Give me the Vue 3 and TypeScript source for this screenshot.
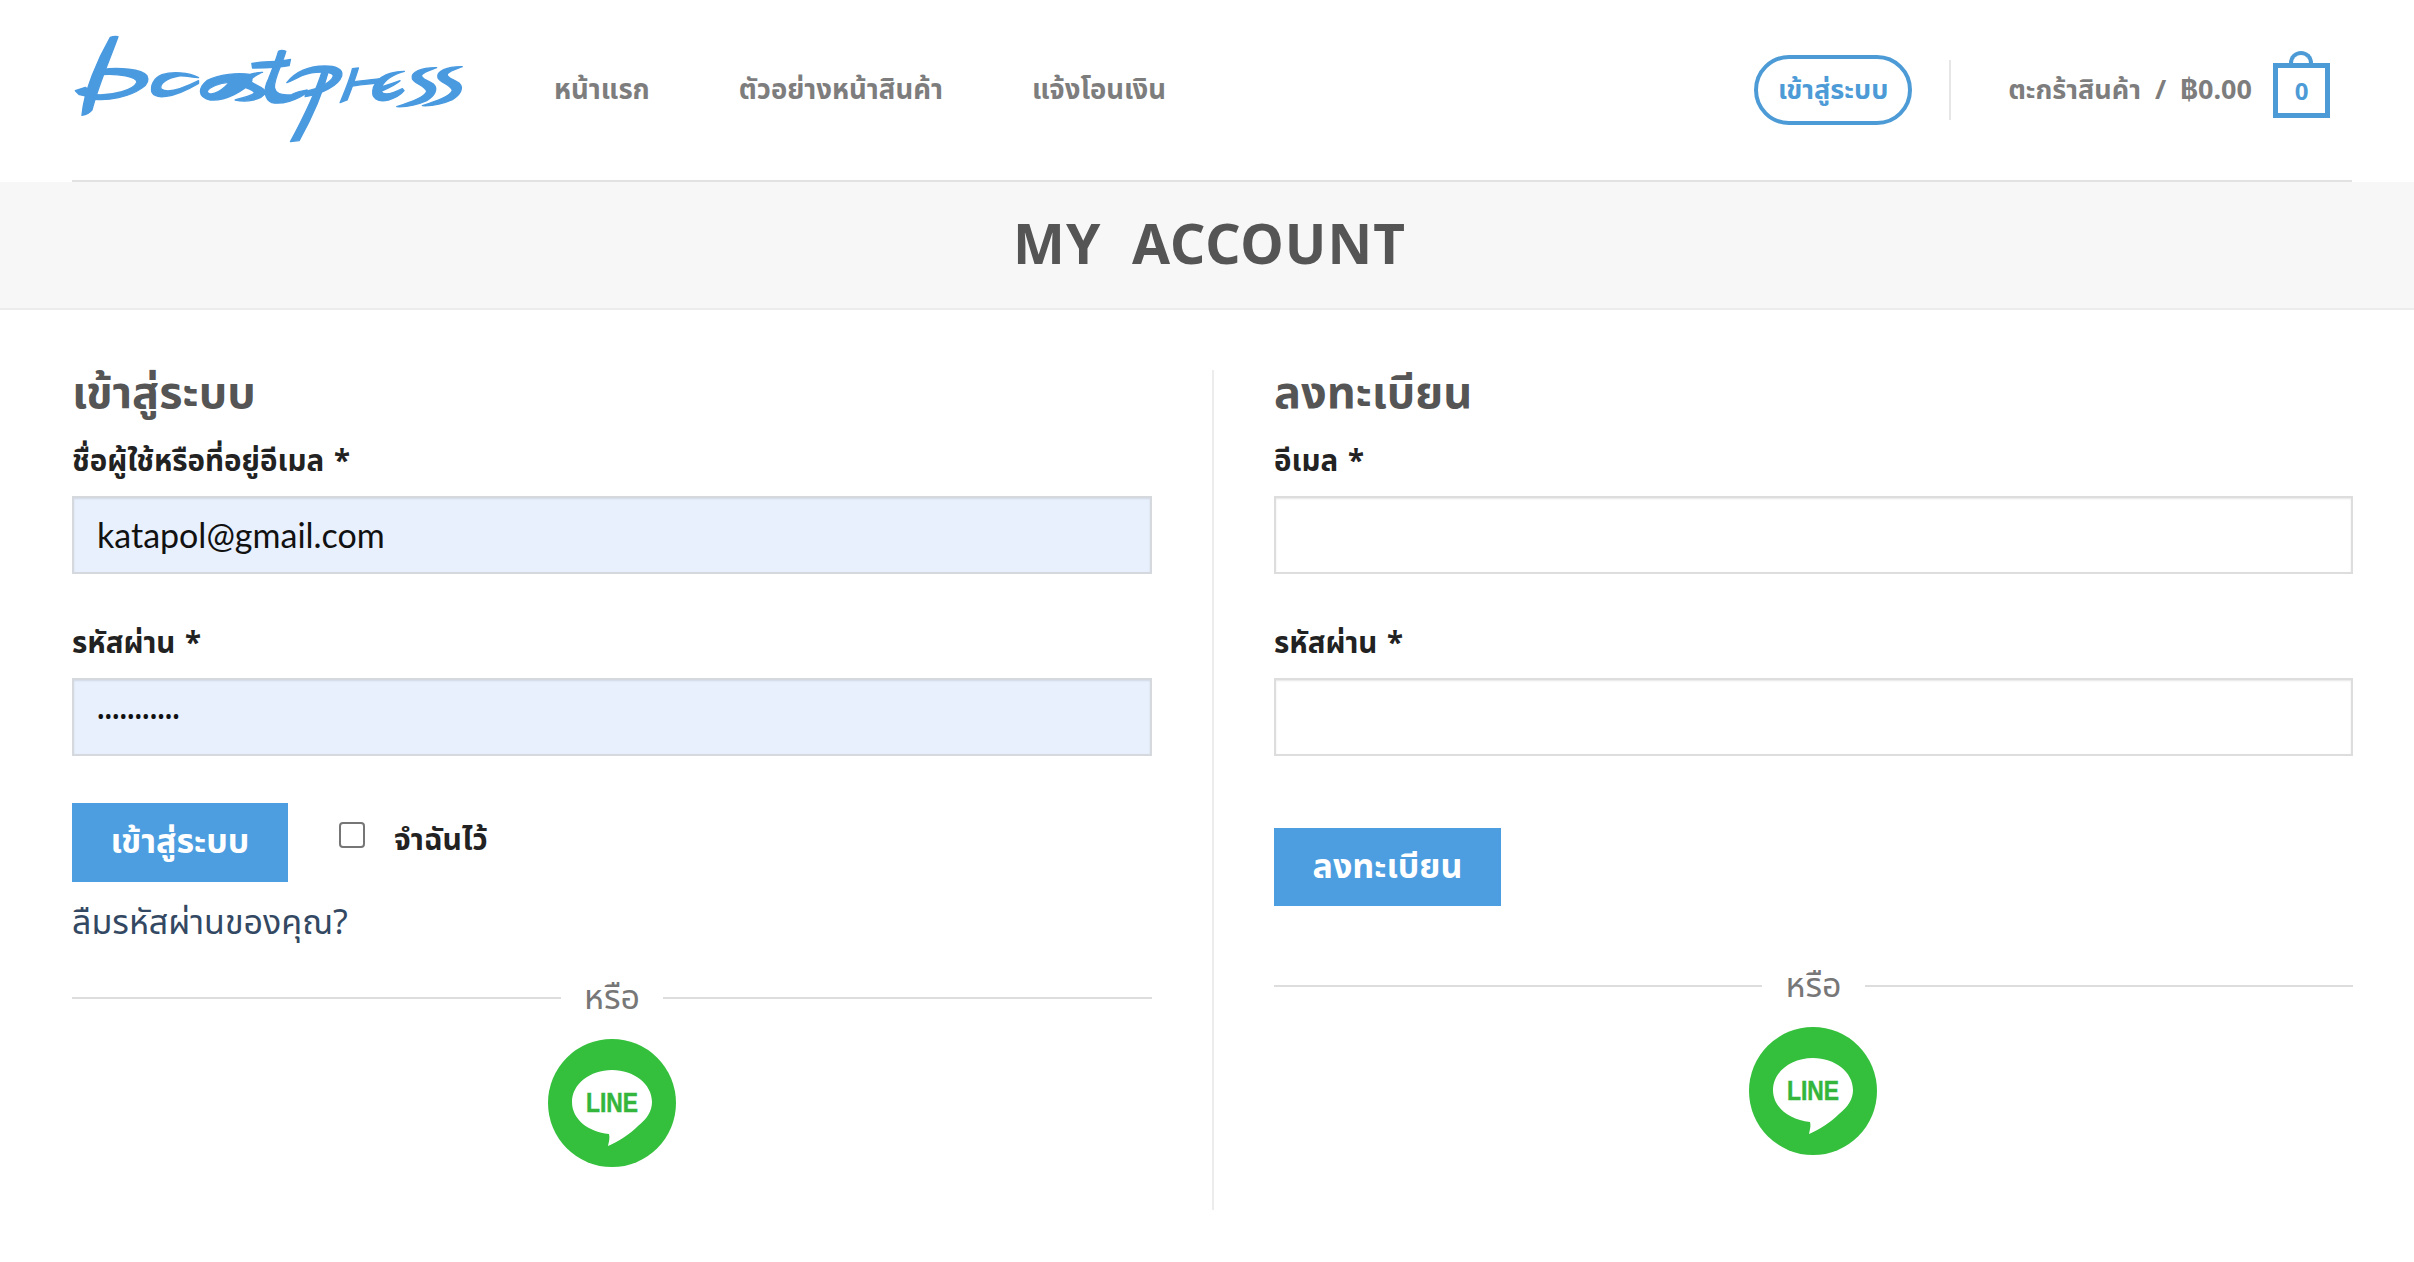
<script setup lang="ts">
const navItems: string[] = ['หน้าแรก', 'ตัวอย่างหน้าสินค้า', 'แจ้งโอนเงิน']
</script>

<template>
  <div class="page">
    <header class="header">
      <div class="header-inner">
        <svg class="logo" viewBox="100 100 1180 330" aria-label="boostpress">
          <g fill="#4a9ae0" stroke="#4a9ae0" stroke-width="4" stroke-linejoin="round" fill-rule="evenodd">
            <path d="M215 110 Q226 106 238 108 C218 165 180 250 160 328 Q150 342 130 344 C136 270 178 175 215 110 Z" />
            <path d="M192 206 C240 200 310 205 325 225 Q335 245 310 262 C270 290 210 300 168 296 L172 282 C225 285 285 268 295 245 C295 228 240 218 188 222 Z" />
            <path d="M110 270 Q125 265 140 260 L170 282 L165 298 Q145 285 122 282 Z" />
            <path d="M480 231 C450 214 400 212 370 222 C345 232 335 255 340 275 C350 296 400 295 480 248 L480 240 C430 265 385 278 368 265 C360 250 385 232 420 226 C445 224 465 232 480 231 Z" />
            <path d="M640 222 C600 215 540 220 505 240 C480 260 475 290 515 298 C560 302 620 270 640 240 Z M572 246 C545 244 510 262 506 272 C510 288 540 280 572 246 Z" />
            <path d="M672 215 C640 216 608 228 608 250 C612 264 640 262 648 276 C640 288 610 290 590 298 C625 306 668 298 682 276 C680 258 640 252 636 240 C640 228 655 222 672 215 Z" />
            <path d="M720 152 Q730 146 742 152 C730 195 705 235 708 262 C712 280 735 285 760 282 C775 272 790 272 806 268 L806 275 C775 300 730 312 700 306 C680 298 672 270 690 235 C700 210 712 180 720 152 Z" />
            <path d="M640 188 C680 182 720 184 756 176 L752 195 C715 202 670 202 642 202 Z" />
            <path d="M853 206 L872 204 C850 290 810 370 782 420 L756 423 C790 360 830 280 853 206 Z" />
            <path d="M745 246 C770 215 810 196 860 196 C890 196 915 205 910 225 C900 255 850 280 800 288 L802 272 C840 265 880 245 885 225 C880 212 830 210 790 225 C775 232 760 240 745 246 Z" />
            <path d="M942 204 L960 202 C950 235 935 275 926 298 L905 306 C920 270 935 235 942 204 Z" />
            <path d="M935 245 C970 240 1000 238 1040 232 L1030 244 C1000 250 965 252 932 258 Z" />
            <path d="M1098 212 C1060 212 1020 225 1005 260 C995 295 1020 305 1050 298 C1070 292 1085 285 1097 270 L1092 264 C1060 280 1035 285 1028 272 C1050 262 1075 250 1085 240 C1062 248 1045 254 1030 258 C1040 235 1070 220 1098 212 Z" />
            <path d="M1195 201 C1150 200 1115 215 1122 235 C1130 250 1160 255 1165 272 C1160 290 1115 305 1075 318 Q1120 320 1165 300 C1190 285 1200 265 1185 250 C1170 238 1145 235 1150 222 C1160 212 1180 207 1195 201 Z" />
            <path d="M1272 198 C1227 197 1192 212 1199 232 C1207 247 1237 252 1242 269 C1237 287 1192 302 1152 315 Q1197 317 1242 297 C1267 282 1277 262 1262 247 C1247 235 1222 232 1227 219 C1237 209 1257 204 1272 198 Z" />
          </g>
        </svg>
        <nav class="nav">
          <a v-for="item in navItems" :key="item" class="nav-link">{{ item }}</a>
        </nav>
        <div class="header-right">
          <a class="login-pill">เข้าสู่ระบบ</a>
          <span class="vline"></span>
          <a class="cart-text">ตะกร้าสินค้า&nbsp; /&nbsp; ฿0.00</a>
          <span class="bag">0</span>
        </div>
      </div>
    </header>

    <div class="title-bar">
      <h1 class="title">MY&nbsp; ACCOUNT</h1>
    </div>

    <main class="columns">
      <section class="col col-left">
        <h2 class="heading">เข้าสู่ระบบ</h2>
        <label class="label">ชื่อผู้ใช้หรือที่อยู่อีเมล *</label>
        <input class="field autofill" type="text" value="katapol@gmail.com" />
        <label class="label second">รหัสผ่าน *</label>
        <input class="field autofill pass" type="password" value="12345678901" />
        <div class="login-row">
          <button class="btn">เข้าสู่ระบบ</button>
          <span class="check"></span>
          <span class="remember">จำฉันไว้</span>
        </div>
        <a class="forgot">ลืมรหัสผ่านของคุณ?</a>
        <div class="or or-left"><span>หรือ</span></div>
        <div class="line-wrap">
          <svg class="line-icon" viewBox="0 0 128 128">
            <circle cx="64" cy="64" r="64" fill="#34c03c" />
            <path d="M64 31 C86 31 104 45 104 63 C104 72 99 80 90 87 C82 95 70 103 60 107 C61 102 62 99 61 95 C40 93 24 80 24 63 C24 45 42 31 64 31 Z" fill="#fff" />
            <text x="64" y="73" text-anchor="middle" textLength="52" lengthAdjust="spacingAndGlyphs" class="line-text">LINE</text>
          </svg>
        </div>
      </section>

      <section class="col col-right">
        <h2 class="heading">ลงทะเบียน</h2>
        <label class="label">อีเมล *</label>
        <input class="field" type="text" />
        <label class="label second">รหัสผ่าน *</label>
        <input class="field" type="password" />
        <button class="btn btn-register">ลงทะเบียน</button>
        <div class="or or-right"><span>หรือ</span></div>
        <div class="line-wrap line-wrap-right">
          <svg class="line-icon" viewBox="0 0 128 128">
            <circle cx="64" cy="64" r="64" fill="#34c03c" />
            <path d="M64 31 C86 31 104 45 104 63 C104 72 99 80 90 87 C82 95 70 103 60 107 C61 102 62 99 61 95 C40 93 24 80 24 63 C24 45 42 31 64 31 Z" fill="#fff" />
            <text x="64" y="73" text-anchor="middle" textLength="52" lengthAdjust="spacingAndGlyphs" class="line-text">LINE</text>
          </svg>
        </div>
      </section>
    </main>
  </div>
</template>

<style>
html, body { margin: 0; background: #fff; }
</style>

<style scoped>
.page {
  width: 2414px;
  height: 1262px;
  overflow: hidden;
  font-family: "Noto Sans", "Inter", "Noto Sans Thai", "DejaVu Sans", sans-serif;
  color: #222;
}
.header-inner {
  margin: 0 62px 0 72px;
  height: 180px;
  border-bottom: 2px solid #e2e2e2;
  display: flex;
  align-items: center;
}
.logo { width: 393px; height: 110px; margin-top: -2px; flex: none; }
.nav { display: flex; gap: 89px; margin-left: 89px; }
.nav-link { font-size: 27.5px; font-weight: 700; color: #7d7d7d; }
.cart-text { font-size: 27px; font-weight: 700; color: #7d7d7d; }
.header-right { margin-left: auto; display: flex; align-items: center; }
.login-pill {
  box-sizing: border-box;
  width: 158px; height: 70px;
  border: 4px solid #4d9bd6;
  border-radius: 35px;
  display: flex; align-items: center; justify-content: center;
  color: #4d9bd6; font-size: 27px; font-weight: 700;
}
.vline { width: 2px; height: 60px; background: #e6e6e6; margin: 0 57px 0 37px; }
.bag {
  position: relative;
  box-sizing: border-box;
  width: 57px; height: 55px;
  margin: 0 22px 0 21px;
  border: 5px solid #4d9bd6;
  display: flex; align-items: center; justify-content: center;
  color: #4d9bd6; font-size: 24px; font-weight: 700;
}
.bag::before {
  content: "";
  position: absolute;
  left: 11px; top: -17px;
  width: 16px; height: 13px;
  border: 4px solid #4d9bd6;
  border-bottom: 0;
  border-radius: 14px 14px 0 0;
}
.title-bar {
  height: 126px;
  background: #f7f7f7;
  border-bottom: 2px solid #ececec;
  display: flex; align-items: center; justify-content: center;
}
.title { margin: 0; padding: 0 0 5px 5px; font-size: 55px; font-weight: 700; color: #555; letter-spacing: 1px; line-height: 1; }
.columns {
  display: grid;
  grid-template-columns: 1142px 1139px;
  margin: 60px 62px 0 72px;
}
.col { height: 840px; box-sizing: border-box; }
.col-left { padding-right: 60px; border-right: 2px solid #ececec; }
.col-right { padding-left: 60px; }
.heading { margin: -3px 0 0; height: 48px; line-height: 48px; font-size: 45px; font-weight: 700; color: #555; }
.label { display: block; height: 40px; line-height: 40px; margin-top: 25px; font-size: 29.5px; font-weight: 700; color: #222; word-spacing: 2px; }
.label.second { margin-top: 48px; }
.field {
  display: block;
  box-sizing: border-box;
  width: 100%; height: 78px;
  margin-top: 16px;
  padding: 0 23px 2px;
  border: 2px solid #ddd;
  background: #fff;
  box-shadow: inset 0 1px 2px rgba(0,0,0,.1);
  font: inherit; font-family: "Lato", sans-serif; font-size: 34px; color: #111;
  outline: 0;
}
.field.autofill { background: #e8f0fe; border-color: #d5d9de; }
.field.pass { font-family: "Noto Sans", sans-serif; font-size: 20px; }
.login-row { display: flex; align-items: center; margin-top: 47px; }
.btn {
  box-sizing: border-box;
  height: 79px; width: 216px;
  border: 0; padding: 0;
  background: #4c9ee0;
  color: #fff; font: inherit; font-size: 34px; font-weight: 700;
  display: block;
}
.btn-register { width: 227px; height: 78px; margin-top: 72px; }
.check {
  box-sizing: border-box;
  width: 26px; height: 26px;
  margin: -15px 0 0 51px;
  border: 2px solid #767676;
  border-radius: 4px;
}
.remember { margin: -3px 0 0 29px; font-size: 30px; font-weight: 700; color: #222; }
.forgot { display: block; margin-top: 16px; height: 46px; line-height: 46px; font-size: 34px; color: #334862; }
.or {
  display: flex; align-items: center; gap: 23px;
  font-size: 34px; color: #777;
  height: 40px;
}
.or::before, .or::after { content: ""; flex: 1; height: 2px; background: #ddd; }
.or-left { margin-top: 34px; }
.or-right { margin-top: 60px; }
.line-wrap { display: flex; justify-content: center; margin-top: 21px; }
.line-wrap-right { padding-right: 2px; }
.line-icon { width: 128px; height: 128px; display: block; }
.line-text { font-family: "Liberation Sans", sans-serif; font-size: 27px; font-weight: 700; fill: #34b53c; stroke: #34b53c; stroke-width: .5; }
</style>
